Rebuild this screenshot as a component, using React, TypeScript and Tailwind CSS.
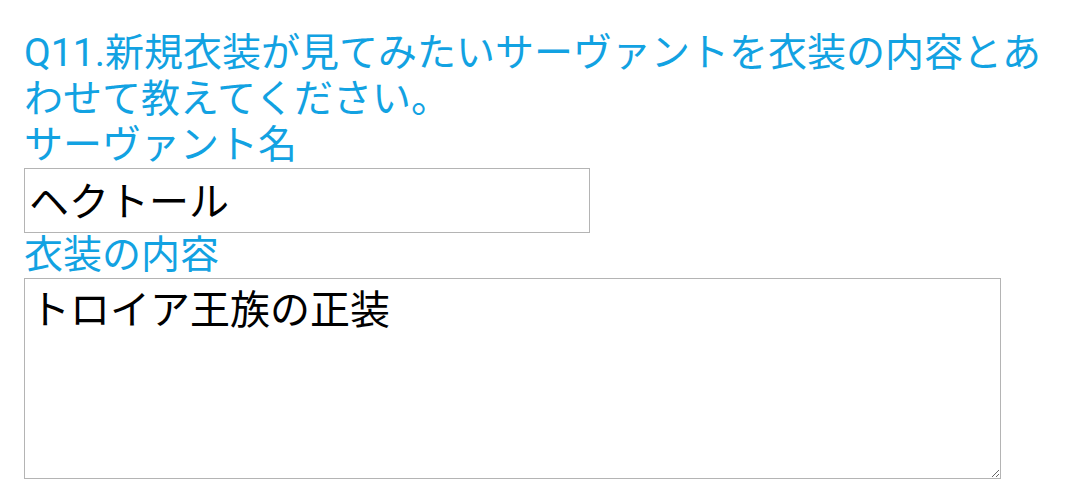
export default function App() {
  return (
    <div
      className="min-h-screen w-full bg-white px-6 pt-[30px]"
      style={{ fontFamily: "Roboto, 'Noto Sans CJK JP', sans-serif" }}
    >
      {/* Question */}
      <p className="text-[39px] leading-[46px] text-[#12a2e2]">
        Q11.新規衣装が見てみたいサーヴァントを衣装の内容とあわせて教えてください。
      </p>

      {/* Servant name */}
      <label className="block text-[39px] leading-[46px] text-[#12a2e2]">サーヴァント名</label>
      <input
        type="text"
        defaultValue="ヘクトール"
        className="block h-[65px] w-[566px] border border-[#b4b4b4] bg-white px-[4px] pb-[4px] text-[40px] text-black outline-none"
      />

      {/* Costume */}
      <label className="block text-[39px] leading-[45px] text-[#12a2e2]">衣装の内容</label>
      <textarea
        defaultValue="トロイア王族の正装"
        className="block h-[201px] w-[977px] border border-[#b4b4b4] bg-white px-[5px] py-[4px] text-[40px] leading-[56px] text-black outline-none"
      />
    </div>
  );
}
